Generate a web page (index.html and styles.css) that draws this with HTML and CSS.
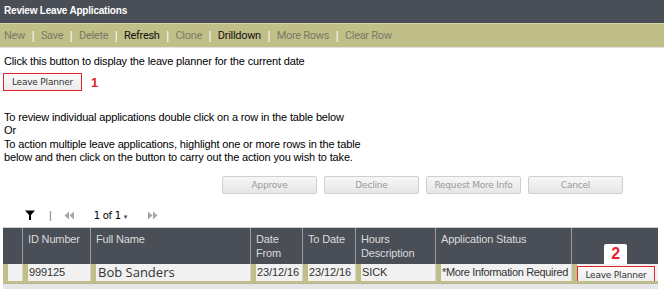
FILE: index.html
```html
<!DOCTYPE html>
<html>
<head>
<meta charset="utf-8">
<link rel="stylesheet" href="styles.css">
</head>
<body>
<div class="titlebar">Review Leave Applications</div>
<div class="toolbar">
  <span class="tb off">New</span><span class="sep">|</span>
  <span class="tb off">Save</span><span class="sep">|</span>
  <span class="tb off">Delete</span><span class="sep">|</span>
  <span class="tb on">Refresh</span><span class="sep">|</span>
  <span class="tb off">Clone</span><span class="sep">|</span>
  <span class="tb on">Drilldown</span><span class="sep">|</span>
  <span class="tb off">More Rows</span><span class="sep">|</span>
  <span class="tb off">Clear Row</span>
</div>
<div class="content">
  <p class="intro">Click this button to display the leave planner for the current date</p>
  <div class="planner-row">
    <button class="lp-btn">Leave Planner</button>
    <span class="marker">1</span>
  </div>
  <p class="instructions">To review individual applications double click on a row in the table below<br>Or<br>To action multiple leave applications, highlight one or more rows in the table<br>below and then click on the button to carry out the action you wish to take.</p>
  <div class="actions">
    <button class="act">Approve</button>
    <button class="act">Decline</button>
    <button class="act">Request More Info</button>
    <button class="act">Cancel</button>
  </div>
  <div class="pager">
    <svg class="filter" width="10" height="10" viewBox="0 0 10 10"><path d="M0 0.5 H10 L6 5 V10 H4 V5 Z" fill="#000"/></svg>
    <span class="psep">|</span>
    <svg class="arr first" width="11" height="9" viewBox="0 0 11 9"><path d="M5 0.5 L0.5 4.5 L5 8.5 Z M10 0.5 L5.5 4.5 L10 8.5 Z" fill="#a6a6a6"/></svg>
    <span class="pages">1 of 1<span class="caret">&#9662;</span></span>
    <svg class="arr next" width="11" height="9" viewBox="0 0 11 9"><path d="M1 0.5 L5.5 4.5 L1 8.5 Z M6 0.5 L10.5 4.5 L6 8.5 Z" fill="#a6a6a6"/></svg>
  </div>
</div>
<div class="grid">
  <div class="hcell first"></div>
  <div class="hcell">ID Number</div>
  <div class="hcell">Full Name</div>
  <div class="hcell">Date<br>From</div>
  <div class="hcell">To Date</div>
  <div class="hcell">Hours<br>Description</div>
  <div class="hcell">Application Status</div>
  <div class="hcell lastcol"><span class="badge">2</span></div>

  <div class="dcell first"></div>
  <div class="dcell">999125</div>
  <div class="dcell name">Bob Sanders</div>
  <div class="dcell">23/12/16</div>
  <div class="dcell">23/12/16</div>
  <div class="dcell">SICK</div>
  <div class="dcell status">*More Information Required</div>
  <div class="dcell btncell"><button class="lp-btn small">Leave Planner</button></div>

  <div class="rowline"></div>
</div>
</body>
</html>
```
FILE: styles.css
```css
html, body {
  margin: 0;
  padding: 0;
  background: #fff;
  font-family: "Liberation Sans", Arial, sans-serif;
  color: #000;
}
.titlebar {
  height: 23px;
  line-height: 22px;
  background: #4a4e57;
  color: #fff;
  font-weight: bold;
  font-size: 10px;
  letter-spacing: -0.2px;
  padding-left: 4px;
}
.toolbar {
  height: 23px;
  background: #c0bf87;
  border-top: 1px solid #d4d3a8;
  border-bottom: 1px solid #e2e2e2;
  display: flex;
  align-items: center;
  padding-left: 4px;
  font-family: Roboto, "Liberation Sans", sans-serif;
  font-size: 11px;
  letter-spacing: -0.3px;
}
.tb.off { color: #7a7a68; }
.tb.on { color: #111; }
.sep {
  color: #fff;
  margin: 0 6.6px;
  font-size: 12px;
}
.content {
  padding: 0 4px;
}
.intro {
  margin: 7px 0 0;
  font-size: 11px;
  line-height: 13px;
  letter-spacing: -0.15px;
}
.planner-row {
  display: flex;
  align-items: center;
  margin-top: 5px;
  margin-left: -1px;
}
.lp-btn {
  width: 79px;
  height: 18px;
  padding: 0;
  border: 1px solid #e5232d;
  background: linear-gradient(#fbfbfb, #ececec);
  font-family: "DejaVu Sans", sans-serif;
  font-size: 9px;
  color: #333;
  letter-spacing: -0.2px;
}
.marker {
  color: #e5232d;
  font-weight: bold;
  font-size: 13px;
  margin-left: 9px;
}
.instructions {
  margin: 20px 0 0;
  font-size: 11px;
  line-height: 13.3px;
  letter-spacing: -0.15px;
}
.actions {
  display: flex;
  justify-content: flex-end;
  gap: 7px;
  margin-top: 12px;
  padding-right: 37px;
}
.act {
  width: 95px;
  height: 18px;
  padding: 0;
  border: 1px solid #cfcfcf;
  border-radius: 2px;
  background: linear-gradient(#f7f7f7, #e6e6e6);
  font-family: "DejaVu Sans", sans-serif;
  font-size: 9px;
  letter-spacing: -0.2px;
  color: #9a9a9a;
}
.pager {
  display: flex;
  align-items: center;
  height: 16px;
  margin-top: 13px;
  padding-left: 21px;
  font-size: 11px;
}
.psep {
  color: #777;
  margin-left: 14px;
  font-size: 11px;
}
.arr.first { margin-left: 12px; }
.pages {
  margin-left: 19px;
  font-family: "DejaVu Sans", sans-serif;
  font-size: 10px;
  letter-spacing: -0.3px;
}
.caret {
  font-size: 7px;
  margin-left: 3px;
  color: #444;
}
.arr.next { margin-left: 20px; }
.grid {
  margin: 4px 0 0 3px;
  width: 655px;
  display: grid;
  grid-template-columns: 19px 68px 160px 52px 53px 80px 136px 87px;
  grid-template-rows: 36px 17px 3px 12px;
  border-top: 1px solid #cfcfcf;
  background: #e6e6e6;
}
.hcell {
  background: #4a4e57;
  color: #dcdcdc;
  font-size: 11px;
  line-height: 14px;
  letter-spacing: -0.15px;
  padding: 4px 0 0 5px;
  border-left: 1px solid #9a9ca0;
  box-sizing: border-box;
}
.hcell.first { border-left: none; }
.lastcol { position: relative; }
.badge {
  position: absolute;
  left: 32px;
  bottom: 0;
  width: 23px;
  height: 20px;
  background: #fff;
  border-radius: 2px 2px 0 0;
  color: #e5232d;
  font-weight: bold;
  font-size: 16px;
  line-height: 20px;
  text-align: center;
}
.dcell {
  background: linear-gradient(to right, #c0bf87 5px, #f1f1f1 5px);
  border-left: 1px solid #d6d6d6;
  padding-left: 6px;
  font-size: 11px;
  line-height: 17px;
  color: #333;
  letter-spacing: -0.1px;
  white-space: nowrap;
  overflow: hidden;
  box-sizing: border-box;
}
.dcell.first { border-left: none; }
.dcell.name {
  font-family: "Open Sans", sans-serif;
  font-size: 13px;
  letter-spacing: 0;
  padding-left: 7px;
}
.dcell.status {
  letter-spacing: -0.35px;
}
.dcell.btncell {
  padding: 2px 0 0 5px;
  overflow: visible;
}
.lp-btn.small {
  width: 78px;
  height: 17px;
  display: block;
}
.rowline {
  grid-column: 1 / -1;
  height: 2px;
  background: #c0bf87;
  border-bottom: 1px dotted #aaa;
}
```
